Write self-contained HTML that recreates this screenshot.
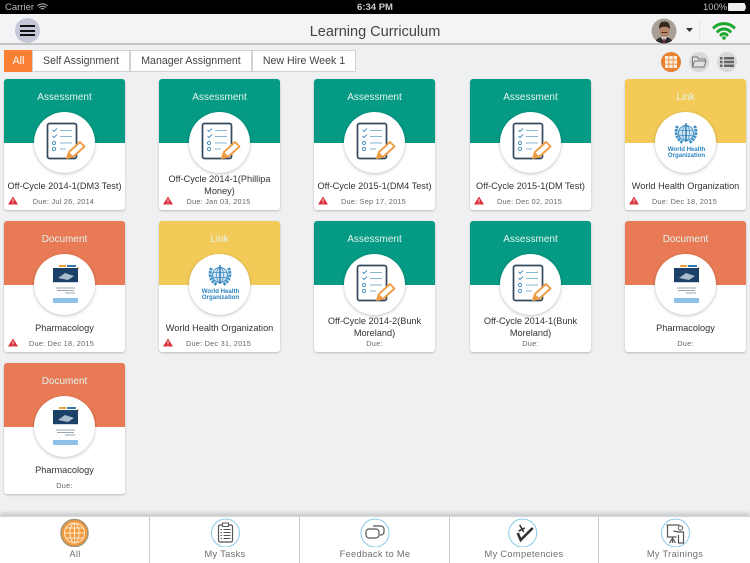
<!DOCTYPE html>
<html><head><meta charset="utf-8"><style>
*{box-sizing:border-box}
html,body{margin:0;padding:0}
body{width:750px;height:563px;position:relative;overflow:hidden;background:#eff0f2;font-family:"Liberation Sans",sans-serif;color:#3a3a3a}
.a{position:absolute}
#status{left:0;top:0;width:750px;height:14px;background:#000}
#nav{left:0;top:14px;width:750px;height:31px;background:#f4f4f6;border-bottom:2px solid #c4c4c4}
#title{left:0;top:22px;width:750px;text-align:center;font-size:14.5px;line-height:20px;color:#444}
.tab{position:absolute;top:50px;height:22px;background:#fff;border:1px solid #d2d2d2;font-size:10.600px;line-height:20px;text-align:center;color:#444}
.card{position:absolute;width:121px;height:131px;background:#fff;border-radius:3px;box-shadow:0 1px 2px rgba(0,0,0,.22);overflow:hidden}
.hd{position:absolute;left:0;top:0;width:121px;height:64px;color:#e4f3ee;font-size:10px;line-height:37px;text-align:center}
.t{background:#049a84}.y{background:#f3ca57}.o{background:#e87a55}
.c{position:absolute;left:30px;top:33px;width:61px;height:61px;border-radius:50%;background:#fff;box-shadow:0 1px 3px rgba(0,0,0,.25)}
.c svg{position:absolute;left:0;top:0}
.n{position:absolute;left:0;width:121px;text-align:center;font-size:9.200px;line-height:12px;color:#333}
.n1{top:100.500px}.n2{top:94px}
.d{position:absolute;left:0;top:117px;width:119px;text-align:center;font-size:7.300px;line-height:11px;color:#666;letter-spacing:.25px}
.e{width:121px}
.w{position:absolute;left:4px;top:117px}
#bar{left:0;top:516px;width:750px;height:47px;background:#fff;border-top:1px solid #d6d6d6;box-shadow:0 -3px 4px rgba(0,0,0,.16)}
.sep{position:absolute;top:517px;width:1px;height:46px;background:#c8c8c8}
.l{position:absolute;top:547.500px;width:150px;text-align:center;font-size:9.300px;line-height:12px;color:#707070;letter-spacing:.3px}
.who1{position:absolute;left:1px;top:34.500px;width:61px;text-align:center;color:#2c83bf;font-size:6.100px;font-weight:bold;line-height:6.800px}
</style></head><body>
<svg width="0" height="0" style="position:absolute"><defs>
<g id="as">
<rect x="13.500" y="11.500" width="29" height="35" rx="2" fill="#fff" stroke="#33485c" stroke-width="1.700"/>
<path d="M18.500 18l1.500 1.500 3-3M18.500 24l1.500 1.500 3-3" stroke="#4e93c0" fill="none" stroke-width="1"/>
<circle cx="20" cy="31" r="1.600" fill="none" stroke="#4e93c0"/><circle cx="20" cy="37" r="1.600" fill="none" stroke="#4e93c0"/>
<path d="M26 18.500h12M26 24.500h12M26 31h12M26 37h6" stroke="#8ab6d3" stroke-width="1.100"/>
<path d="M33 46l2-6 11-10 4.500 4.500-11 10z" fill="#fff" stroke="#ee9d45" stroke-width="1.900" stroke-linejoin="round"/>
<path d="M33 46l2-6 4.500 4.500z" fill="#ee9d45"/>
</g>
<g id="gl">
<circle cx="31" cy="21" r="7.500" fill="#cfe3f1" stroke="#3f8fc4" stroke-width="1"/>
<ellipse cx="31" cy="21" rx="3.500" ry="7.500" fill="none" stroke="#3f8fc4" stroke-width=".7"/>
<path d="M24 18.500h14M24 23.500h14" stroke="#3f8fc4" stroke-width=".7"/>
<path d="M31 11v19" stroke="#1f6ea8" stroke-width="1.300"/>
<path d="M22.500 14c-3 6-1 13 5 16.500M39.500 14c3 6 1 13-5 16.500" fill="none" stroke="#3f8fc4" stroke-width="3" stroke-dasharray="2.500 .8"/>
</g>
<g id="bk">
<rect x="19" y="10" width="25" height="39" fill="#fff"/>
<rect x="25" y="11" width="7" height="2" fill="#e8a23c"/><rect x="33" y="11" width="9" height="2" fill="#3a78b0"/>
<rect x="43" y="13" width="1.500" height="2" fill="#e8a23c"/>
<rect x="19" y="14" width="25" height="14" fill="#1c4068"/>
<path d="M24 24l7-5 9 3-6 4z" fill="#a9bccb"/>
<path d="M19 28h25v1H19z" fill="#cfd8e2"/>
<path d="M22 34h19M23 36.500h17M31 39h10" stroke="#7a8694" stroke-width=".8"/>
<rect x="19" y="44" width="25" height="5" fill="#8fc0e6"/>
</g>
<g id="wn"><path d="M5 .5L10 8.500H0z" fill="#d9303a"/><rect x="4.600" y="3" width=".8" height="3" fill="#fff"/><rect x="4.600" y="6.800" width=".8" height=".8" fill="#fff"/></g>
</defs></svg>

<div class="a" id="status"></div>
<span class="a" style="left:5px;top:2px;font-size:9.500px;line-height:11px;color:#bbb">Carrier</span>
<svg class="a" style="left:37px;top:3px" width="11" height="8" viewBox="0 0 11 8"><path d="M.5 3a7 7 0 0 1 10 0M2.200 4.700a4.600 4.600 0 0 1 6.600 0M3.800 6.300a2.200 2.200 0 0 1 3.400 0" stroke="#bbb" fill="none"/></svg>
<span class="a" style="left:0;top:2px;width:750px;text-align:center;font-size:9.500px;font-weight:bold;line-height:11px;color:#ccc">6:34 PM</span>
<span class="a" style="left:703px;top:2px;font-size:9.500px;line-height:11px;color:#bbb">100%</span>
<div class="a" style="left:728px;top:3px;width:17px;height:8px;background:#eee;border-radius:1px"></div>
<div class="a" style="left:745px;top:5px;width:1px;height:4px;background:#bbb"></div>

<div class="a" id="nav"></div>
<div class="a" id="title">Learning Curriculum</div>
<div class="a" style="left:15px;top:18px;width:25px;height:25px;border-radius:50%;background:#c4c8d6"></div>
<div class="a" style="left:20px;top:25px;width:15px;height:2px;background:#111"></div>
<div class="a" style="left:20px;top:29.500px;width:15px;height:2px;background:#111"></div>
<div class="a" style="left:20px;top:34px;width:15px;height:2px;background:#111"></div>
<svg class="a" style="left:651px;top:18px" width="26" height="26" viewBox="0 0 26 26"><defs><clipPath id="av"><circle cx="13" cy="13" r="12.500"/></clipPath></defs><g clip-path="url(#av)"><rect width="26" height="26" fill="#a8a095"/><path d="M3 27c1-6 5-8 10-8s9 2 10 8z" fill="#2e2a2c"/><path d="M10 19l3 5 3-5z" fill="#e8e0dc"/><path d="M12.500 20h1l.5 5h-2z" fill="#7a2a2a"/><ellipse cx="13.500" cy="12" rx="5" ry="7" fill="#b5856a"/><path d="M8 11c0-6 2-7.500 5.500-7.500S19 5 19 11c-2-3-9-3-11 0z" fill="#35291f"/><path d="M10.500 14.500h6" stroke="#4a3026" stroke-width="1"/></g></svg>
<svg class="a" style="left:686px;top:28px" width="7" height="4"><path d="M0 0h7L3.500 4z" fill="#333"/></svg>
<div class="a" style="left:699px;top:20px;width:1px;height:20px;background:#e6e6e8"></div>
<svg class="a" style="left:711px;top:21px" width="26" height="20" viewBox="0 0 26 20"><g fill="none" stroke="#1da52c" stroke-width="3" stroke-linecap="round"><path d="M3 6.500a15 15 0 0 1 20 0"/><path d="M6.800 10.500a9 9 0 0 1 12.400 0"/><path d="M10 14a4 4 0 0 1 6 0"/></g><circle cx="13" cy="17" r="1.800" fill="#1da52c"/></svg>

<div class="tab" style="left:4px;width:29px;background:#fb8034;color:#fff;border-color:#fb8034">All</div>
<div class="tab" style="left:32px;width:98px">Self Assignment</div>
<div class="tab" style="left:130px;width:122px">Manager Assignment</div>
<div class="tab" style="left:252px;width:104px">New Hire Week 1</div>

<svg class="a" style="left:660px;top:51px" width="78" height="22" viewBox="0 0 78 22"><circle cx="11" cy="11" r="10" fill="#e5812f"/><g fill="#fdebd9"><rect x="5" y="5" width="3.500" height="3.500"/><rect x="9.250" y="5" width="3.500" height="3.500"/><rect x="13.500" y="5" width="3.500" height="3.500"/><rect x="5" y="9.250" width="3.500" height="3.500"/><rect x="9.250" y="9.250" width="3.500" height="3.500"/><rect x="13.500" y="9.250" width="3.500" height="3.500"/><rect x="5" y="13.500" width="3.500" height="3.500"/><rect x="9.250" y="13.500" width="3.500" height="3.500"/><rect x="13.500" y="13.500" width="3.500" height="3.500"/></g><circle cx="39" cy="11" r="10" fill="#d8d8d8"/><path d="M32.500 16V6h5l1 2h6.500v2M32.500 16l2-6h11.500l-2 6z" fill="#e2e2e2" stroke="#777"/><circle cx="67" cy="11" r="10" fill="#d8d8d8"/><path d="M60 6h2.500v2.500H60zM60 9.800h2.500v2.500H60zM60 13.500h2.500V16H60zM64 6h10v2.500H64zM64 9.800h10v2.500H64zM64 13.500h10V16H64z" fill="#666"/></svg>

<!-- Row 1 -->
<div class="card" style="left:4px;top:79px"><div class="hd t">Assessment</div><div class="c"><svg width="61" height="61"><use href="#as"/></svg></div><div class="n n1">Off-Cycle 2014-1(DM3 Test)</div><svg class="w" width="10" height="10"><use href="#wn"/></svg><div class="d">Due: Jul 26, 2014</div></div>
<div class="card" style="left:159px;top:79px"><div class="hd t">Assessment</div><div class="c"><svg width="61" height="61"><use href="#as"/></svg></div><div class="n n2">Off-Cycle 2014-1(Phillipa<br>Money)</div><svg class="w" width="10" height="10"><use href="#wn"/></svg><div class="d">Due: Jan 03, 2015</div></div>
<div class="card" style="left:314px;top:79px"><div class="hd t">Assessment</div><div class="c"><svg width="61" height="61"><use href="#as"/></svg></div><div class="n n1">Off-Cycle 2015-1(DM4 Test)</div><svg class="w" width="10" height="10"><use href="#wn"/></svg><div class="d">Due: Sep 17, 2015</div></div>
<div class="card" style="left:470px;top:79px"><div class="hd t">Assessment</div><div class="c"><svg width="61" height="61"><use href="#as"/></svg></div><div class="n n1">Off-Cycle 2015-1(DM Test)</div><svg class="w" width="10" height="10"><use href="#wn"/></svg><div class="d">Due: Dec 02, 2015</div></div>
<div class="card" style="left:625px;top:79px"><div class="hd y">Link</div><div class="c"><svg width="61" height="61"><use href="#gl"/></svg><div class="who1">World Health<br>Organization</div></div><div class="n n1">World Health Organization</div><svg class="w" width="10" height="10"><use href="#wn"/></svg><div class="d">Due: Dec 18, 2015</div></div>
<!-- Row 2 -->
<div class="card" style="left:4px;top:221px"><div class="hd o">Document</div><div class="c"><svg width="61" height="61"><use href="#bk"/></svg></div><div class="n n1">Pharmacology</div><svg class="w" width="10" height="10"><use href="#wn"/></svg><div class="d" style="width:115px">Due: Dec 18, 2015</div></div>
<div class="card" style="left:159px;top:221px"><div class="hd y">Link</div><div class="c"><svg width="61" height="61"><use href="#gl"/></svg><div class="who1">World Health<br>Organization</div></div><div class="n n1">World Health Organization</div><svg class="w" width="10" height="10"><use href="#wn"/></svg><div class="d">Due: Dec 31, 2015</div></div>
<div class="card" style="left:314px;top:221px"><div class="hd t">Assessment</div><div class="c"><svg width="61" height="61"><use href="#as"/></svg></div><div class="n n2">Off-Cycle 2014-2(Bunk<br>Moreland)</div><div class="d e">Due:</div></div>
<div class="card" style="left:470px;top:221px"><div class="hd t">Assessment</div><div class="c"><svg width="61" height="61"><use href="#as"/></svg></div><div class="n n2">Off-Cycle 2014-1(Bunk<br>Moreland)</div><div class="d e">Due:</div></div>
<div class="card" style="left:625px;top:221px"><div class="hd o">Document</div><div class="c"><svg width="61" height="61"><use href="#bk"/></svg></div><div class="n n1">Pharmacology</div><div class="d e">Due:</div></div>
<!-- Row 3 -->
<div class="card" style="left:4px;top:363px"><div class="hd o">Document</div><div class="c"><svg width="61" height="61"><use href="#bk"/></svg></div><div class="n n1">Pharmacology</div><div class="d e">Due:</div></div>

<div class="a" id="bar"></div>
<div class="sep" style="left:149px"></div><div class="sep" style="left:299px"></div><div class="sep" style="left:449px"></div><div class="sep" style="left:598px"></div>

<svg class="a" style="left:0;top:517px" width="750" height="30" viewBox="0 0 750 30">
<g transform="translate(74.500 16)"><circle r="13.500" fill="#f29a3c" stroke="#a39478" stroke-width="1.500"/><g fill="none" stroke="#fde8cf"><circle r="10"/><ellipse rx="4.500" ry="10"/><path d="M-10 0h20M0-10v20M-9-5h18M-9 5h18"/></g></g>
<g transform="translate(225.500 16)"><circle r="14" fill="#fff" stroke="#8ccbe8"/><rect x="-7" y="-8" width="14" height="17" rx="1.500" fill="none" stroke="#555" stroke-width="1.200"/><rect x="-3" y="-10" width="6" height="3.500" fill="#fff" stroke="#555"/><path d="M-5-3.500h1.500M-5-.5h1.500M-5 2.500h1.500M-5 5.500h1.500M-2-3.500h7M-2-.5h7M-2 2.500h7M-2 5.500h7" stroke="#555" stroke-width=".9"/></g>
<g transform="translate(375 16)"><circle r="14" fill="#fff" stroke="#8ccbe8"/><path d="M-2-7h8a3 3 0 0 1 3 3v3a3 3 0 0 1-3 3h-1" fill="none" stroke="#555" stroke-width="1.200"/><path d="M-6-4h7a3 3 0 0 1 3 3v3a3 3 0 0 1-3 3h-7a3 3 0 0 1-3-3v-3a3 3 0 0 1 3-3z" fill="#fff" stroke="#555" stroke-width="1.200"/></g>
<g transform="translate(522.700 16)"><circle r="14" fill="#fff" stroke="#8ccbe8"/><path d="M-5 0L-2 7 10-5" fill="none" stroke="#333" stroke-width="2.600"/><path d="M-3-8L1-1M-4-2L2-5" stroke="#333" stroke-width="1.600"/></g>
<g transform="translate(675.500 16)"><circle r="14" fill="#fff" stroke="#8ccbe8"/><path d="M-9-8H4M-8-8V4h9M-3 4v6M-3 5l-3 5M-3 5l3 5" fill="none" stroke="#555" stroke-width="1.200"/><circle cx="5" cy="-5" r="2.200" fill="none" stroke="#555"/><path d="M-2-2L3-1h5v11H3V2" fill="none" stroke="#555" stroke-width="1.200"/></g>
</svg>
<div class="l" style="left:0">All</div>
<div class="l" style="left:150px">My Tasks</div>
<div class="l" style="left:300px">Feedback to Me</div>
<div class="l" style="left:449px">My Competencies</div>
<div class="l" style="left:600px">My Trainings</div>
</body></html>
